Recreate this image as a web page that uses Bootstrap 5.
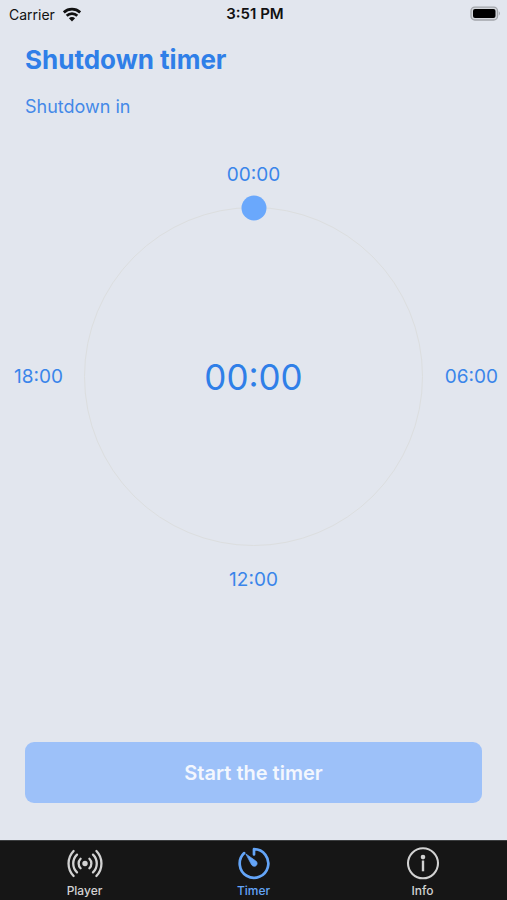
<!DOCTYPE html>
<html lang="en">
<head>
<meta charset="utf-8">
<meta name="viewport" content="width=device-width, initial-scale=1">
<title>Shutdown timer</title>
<link href="https://cdn.jsdelivr.net/npm/bootstrap@5.3.0/dist/css/bootstrap.min.css" rel="stylesheet">
<style>
  body { font-family: Inter, "Liberation Sans", sans-serif; background: #e2e6ee; color: #2f7fe8; }
  .status-bar { display: grid; grid-template-columns: 1fr auto 1fr; height: 28px; padding: 0 6px 0 9px; color: #111; font-size: 14px; }
  .status-time { font-size: 15px; }
  .page-head { padding: 16px 25px 0; }
  .page-title { font-size: 26px; line-height: 32px; font-weight: 700; }
  .page-sub { font-size: 18px; line-height: 24px; margin-top: 19px; color: #4489e8; }
  .dial { display: grid; grid-template-columns: 84px minmax(0, 1fr) 84px; align-items: center; margin-top: 44px; font-size: 19px; line-height: 24px; color: #3a85ea; }
  .dial-top { grid-column: 1 / -1; margin-bottom: 20px; }
  .dial-bottom { grid-column: 1 / -1; margin-top: 22px; }
  .dial-left { padding-left: 14px; }
  .dial-right { padding-right: 9px; }
  .dial-ring { aspect-ratio: 1; border: 1px solid #dcdedf; }
  .dial-value { font-size: 35px; line-height: 44px; color: #2f7fe8; }
  .dial-knob { appearance: none; position: absolute; top: 0; left: 50%; transform: translate(-50%, -50%); width: 25px; height: 25px; margin: 0; background: none; }
  .dial-knob::-webkit-slider-thumb { appearance: none; width: 25px; height: 25px; border: 0; border-radius: 50%; background: #6aa8fc; }
  .dial-knob::-moz-range-thumb { width: 25px; height: 25px; border: 0; border-radius: 50%; background: #6aa8fc; }
  .action { padding: 24px 25px 37px; }
  .btn-start { height: 61px; border: 0; border-radius: 9px; background: #9dc1f9; color: #f3f7fe; font-size: 20px; font-weight: 600; }
  .btn-start:hover { background: #8bb6f8; color: #fff; }
  .tab-bar { height: 60px; background: #161616; border-top: 1px solid #3c3e40; }
  .tab-item { color: #d2d2d2; font-size: 12px; line-height: 14px; font-weight: 500; padding-top: 4px; }
  .tab-item svg { margin-bottom: 3px; }
  .tab-item.active { color: #64a5f8; }
</style>
<script src="https://cdn.jsdelivr.net/npm/bootstrap@5.3.0/dist/js/bootstrap.bundle.min.js"></script>
</head>
<body class="d-flex flex-column min-vh-100">
  <header class="status-bar align-items-center">
    <div class="d-flex align-items-center gap-2">
      <span>Carrier</span>
      <svg width="18" height="15" viewBox="1 0 18 15" fill="none" stroke="#111" stroke-width="2.7" aria-hidden="true">
        <path d="M1.8 5.4A12 12 0 0 1 18.2 5.4"/><path d="M4.7 8.8A7.6 7.6 0 0 1 15.3 8.8"/>
        <path d="M10 14.4L6.9 11.2A4.4 4.4 0 0 1 13.1 11.2Z" fill="#111" stroke="none"/>
      </svg>
    </div>
    <span class="status-time fw-semibold">3:51 PM</span>
    <svg class="ms-auto" width="31" height="16" viewBox="0 0 31 16" aria-hidden="true">
      <rect x="1" y="1.2" width="26.5" height="12.8" rx="3.8" fill="#d4d7dc" stroke="#a2a5aa" stroke-width="1.3"/>
      <rect x="3" y="3.1" width="22.5" height="9" rx="2" fill="#000"/>
      <path d="M28.8 5.3Q31 7.5 28.8 9.8Z" fill="#a2a5aa"/>
    </svg>
  </header>

  <main class="flex-grow-1 d-flex flex-column">
    <div class="page-head">
      <h1 class="page-title mb-0">Shutdown timer</h1>
      <p class="page-sub mb-0">Shutdown in</p>
    </div>

    <section class="dial text-center" aria-label="Timer dial">
      <div class="dial-top">00:00</div>
      <div class="dial-left text-start">18:00</div>
      <div class="dial-ring rounded-circle position-relative d-flex align-items-center justify-content-center">
        <output class="dial-value" for="delay">00:00</output>
        <input class="dial-knob" type="range" id="delay" min="0" max="1439" value="0" aria-label="Shutdown in">
      </div>
      <div class="dial-right text-end">06:00</div>
      <div class="dial-bottom">12:00</div>
    </section>

    <div class="action mt-auto">
      <button type="button" class="btn btn-start w-100">Start the timer</button>
    </div>
  </main>

  <nav class="tab-bar row g-0 text-center" aria-label="Main">
    <a href="#player" class="tab-item col d-flex flex-column align-items-center text-decoration-none">
      <svg width="38" height="36" viewBox="0 0 38 36" fill="none" stroke="currentColor" stroke-width="2.3" stroke-linecap="round" aria-hidden="true">
        <circle cx="19" cy="18.5" r="2.7" fill="currentColor" stroke="none"/>
        <path d="M14.6 13.8A6.6 6.6 0 0 0 14.6 23.2M11 9.6A12.4 12.4 0 0 0 11 27.4M7.6 6A18 18 0 0 0 7.6 31M23.4 13.8A6.6 6.6 0 0 1 23.4 23.2M27 9.6A12.4 12.4 0 0 1 27 27.4M30.4 6A18 18 0 0 1 30.4 31"/>
      </svg>
      Player
    </a>
    <a href="#timer" class="tab-item active col d-flex flex-column align-items-center text-decoration-none" aria-current="page">
      <svg width="38" height="36" viewBox="0 0 38 36" fill="none" stroke="currentColor" stroke-width="2.7" stroke-linecap="round" stroke-linejoin="round" aria-hidden="true">
        <path d="M19 9.5V4.2A14.3 14.3 0 1 1 9.2 8.1"/>
        <path d="M11.2 9.2L20.8 16A2.9 2.9 0 1 1 16.9 20.2Z" fill="currentColor" stroke-width="0.8"/>
      </svg>
      Timer
    </a>
    <a href="#info" class="tab-item col d-flex flex-column align-items-center text-decoration-none">
      <svg width="38" height="36" viewBox="0 0 38 36" fill="none" stroke="currentColor" aria-hidden="true">
        <circle cx="19" cy="18.3" r="15" stroke-width="2.1"/>
        <circle cx="19" cy="12.1" r="2.3" fill="currentColor" stroke="none"/>
        <path d="M19 15.5V26.3" stroke-width="2.4"/>
      </svg>
      Info
    </a>
  </nav>
</body>
</html>
